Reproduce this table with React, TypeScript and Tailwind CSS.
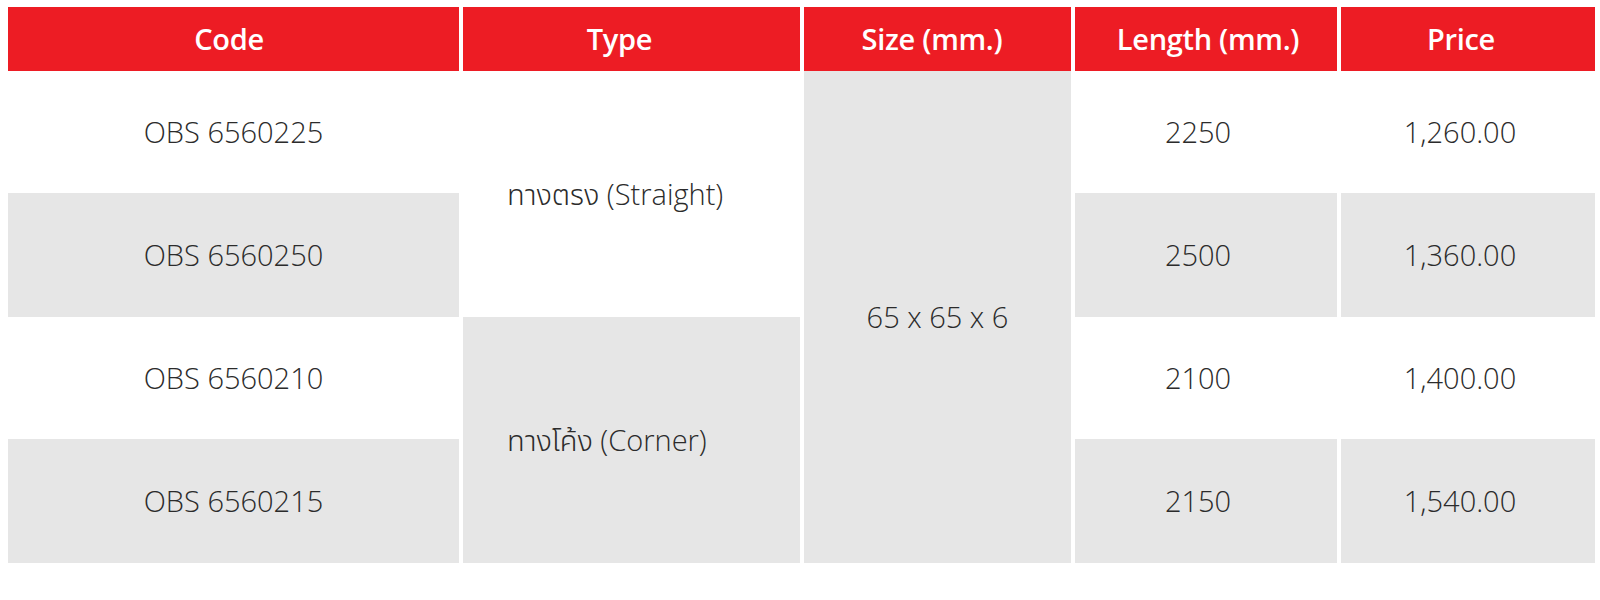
import React from 'react';

interface Row {
  code: string;
  length: string;
  price: string;
  shade: boolean;
}

const rows: Row[] = [
  { code: 'OBS 6560225', length: '2250', price: '1,260.00', shade: false },
  { code: 'OBS 6560250', length: '2500', price: '1,360.00', shade: true },
  { code: 'OBS 6560210', length: '2100', price: '1,400.00', shade: false },
  { code: 'OBS 6560215', length: '2150', price: '1,540.00', shade: true },
];

// header labels, with a small nudge each so they sit where the picture has them
const headers = [
  { label: 'Code', pad: 'pr-[9px]' },
  { label: 'Type', pad: 'pr-[24px]' },
  { label: 'Size (mm.)', pad: 'pr-[11px]' },
  { label: 'Length (mm.)', pad: 'pl-[4px]' },
  { label: 'Price', pad: 'pr-[14px]' },
];

const font = { fontFamily: '"Open Sans", "Noto Sans", "Noto Sans Thai", sans-serif' };

export default function App() {
  return (
    <div className="w-[1600px] h-[600px] bg-white pt-[7px] pl-[8px]" style={font}>
      <div className="grid grid-cols-[451px_337px_267px_262px_254px] grid-rows-[64px_122px_124px_122px_124px] gap-x-[4px] text-[#2b2b2b]">
        {/* header */}
        {headers.map((h) => (
          <div
            key={h.label}
            className={
              h.pad +
              ' bg-[#ed1c24] flex items-center justify-center text-white text-[29px] font-semibold tracking-[-0.3px]'
            }
          >
            {h.label}
          </div>
        ))}

        {/* row 1 */}
        <Cell shade={rows[0].shade}>{rows[0].code}</Cell>
        <div className="row-span-2 bg-white flex items-center pl-[44px] text-[29px] font-light">
          ทางตรง (Straight)
        </div>
        <div className="row-span-4 bg-[#e6e6e6] flex items-center justify-center text-[29px] font-light">
          65 x 65 x 6
        </div>
        <Cell shade={rows[0].shade} shift>{rows[0].length}</Cell>
        <Cell shade={rows[0].shade} shift>{rows[0].price}</Cell>

        {/* row 2 */}
        <Cell shade={rows[1].shade}>{rows[1].code}</Cell>
        <Cell shade={rows[1].shade} shift>{rows[1].length}</Cell>
        <Cell shade={rows[1].shade} shift>{rows[1].price}</Cell>

        {/* row 3 */}
        <Cell shade={rows[2].shade}>{rows[2].code}</Cell>
        <div className="row-span-2 bg-[#e6e6e6] flex items-center pl-[44px] text-[29px] font-light">
          ทางโค้ง (Corner)
        </div>
        <Cell shade={rows[2].shade} shift>{rows[2].length}</Cell>
        <Cell shade={rows[2].shade} shift>{rows[2].price}</Cell>

        {/* row 4 */}
        <Cell shade={rows[3].shade}>{rows[3].code}</Cell>
        <Cell shade={rows[3].shade} shift>{rows[3].length}</Cell>
        <Cell shade={rows[3].shade} shift>{rows[3].price}</Cell>
      </div>
    </div>
  );
}

function Cell({ shade, shift, children }: { shade: boolean; shift?: boolean; children: React.ReactNode }) {
  return (
    <div
      className={
        (shade ? 'bg-[#e6e6e6] ' : 'bg-white ') +
        (shift ? 'pr-[16px] ' : '') +
        'flex items-center justify-center text-[29px] font-light'
      }
    >
      {children}
    </div>
  );
}
